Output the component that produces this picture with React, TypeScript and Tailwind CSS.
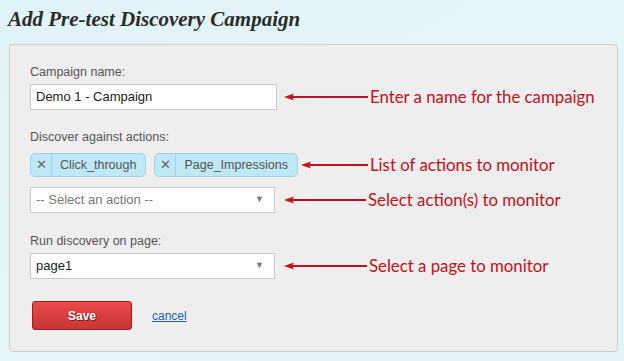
function Arrow({ width }: { width: number }) {
  return (
    <svg width={width} height="10" viewBox={`0 0 ${width} 10`} className="shrink-0">
      <line x1="6" y1="5" x2={width} y2="5" stroke="#c0121b" strokeWidth="2" />
      <polygon points="0,5 10,1.5 8,5 10,8.5" fill="#c0121b" />
    </svg>
  );
}

function Note({ text, arrow, gap }: { text: string; arrow: number; gap: number }) {
  return (
    <div className="flex items-center" style={{ marginLeft: gap }}>
      <Arrow width={arrow} />
      <span className="ml-[2px] text-[16.8px] leading-none text-[#c0121b] font-['Lato',sans-serif]">{text}</span>
    </div>
  );
}

function Tag({ label }: { label: string }) {
  return (
    <div className="flex h-[24px] items-stretch rounded-[5px] border border-[#9fd3e3] bg-[#bde8f4] text-[12.5px] text-[#555]">
      <span className="flex w-[21px] items-center justify-center border-r border-[#9fd3e3] text-[13px] text-[#666]">
        ✕
      </span>
      <span className="flex items-center pl-[8px] pr-[9px]">{label}</span>
    </div>
  );
}

function Select({ value, muted }: { value: string; muted?: boolean }) {
  return (
    <div className="flex h-[26px] w-[245px] shrink-0 items-center justify-between border border-[#c8c8c8] bg-white pl-[5px] pr-[10px] text-[13px]">
      <span className={muted ? 'text-[#777]' : 'text-[#222]'}>{value}</span>
      <span className="text-[9px] text-[#777]">▼</span>
    </div>
  );
}

export default function App() {
  return (
    <div className="h-[361px] w-[624px] overflow-hidden bg-gradient-to-br from-[#e0f3f8] via-[#e6f5f9] to-[#e3f3f8] font-['Liberation_Sans',Arial,sans-serif]">
      <h1 className="pl-[8px] pt-[7px] text-[21px] leading-[24px] font-bold italic text-[#2b2b2b] font-['Liberation_Serif',serif]">
        Add Pre-test Discovery Campaign
      </h1>

      <div className="ml-[9px] mt-[13px] h-[308px] w-[609px] rounded-[4px] border border-[#cfcfcf] bg-[#eeeeee] pl-[20px] pt-[20px]">
        <div className="text-[12.5px] leading-[14px] text-[#555]">Campaign name:</div>
        <div className="mt-[5px] flex items-center">
          <div className="flex h-[26px] w-[247px] shrink-0 items-center border border-[#c8c8c8] bg-white px-[5px] text-[13px] text-[#222]">
            Demo 1 - Campaign
          </div>
          <Note text="Enter a name for the campaign" arrow={84} gap={7} />
        </div>

        <div className="mt-[20px] text-[12.5px] leading-[14px] text-[#555]">Discover against actions:</div>
        <div className="mt-[9px] flex items-center">
          <Tag label="Click_through" />
          <div className="ml-[8px]">
            <Tag label="Page_Impressions" />
          </div>
          <Note text="List of actions to monitor" arrow={67} gap={3} />
        </div>

        <div className="mt-[10px] flex items-center">
          <Select value="-- Select an action --" muted />
          <Note text="Select action(s) to monitor" arrow={82} gap={9} />
        </div>

        <div className="mt-[21px] text-[12.5px] leading-[14px] text-[#555]">Run discovery on page:</div>
        <div className="mt-[5px] flex items-center">
          <Select value="page1" />
          <Note text="Select a page to monitor" arrow={83} gap={9} />
        </div>

        <div className="mt-[22px] flex items-center">
          <button className="ml-[2px] h-[29px] w-[100px] rounded-[3px] border border-[#a81a1a] bg-gradient-to-b from-[#ea4b4b] to-[#c93434] text-[12px] font-bold text-white [text-shadow:1px_1px_0_#7a1a1a]">
            Save
          </button>
          <a href="#" className="ml-[20px] text-[12px] text-[#1a5fb4] underline">
            cancel
          </a>
        </div>
      </div>
    </div>
  );
}
